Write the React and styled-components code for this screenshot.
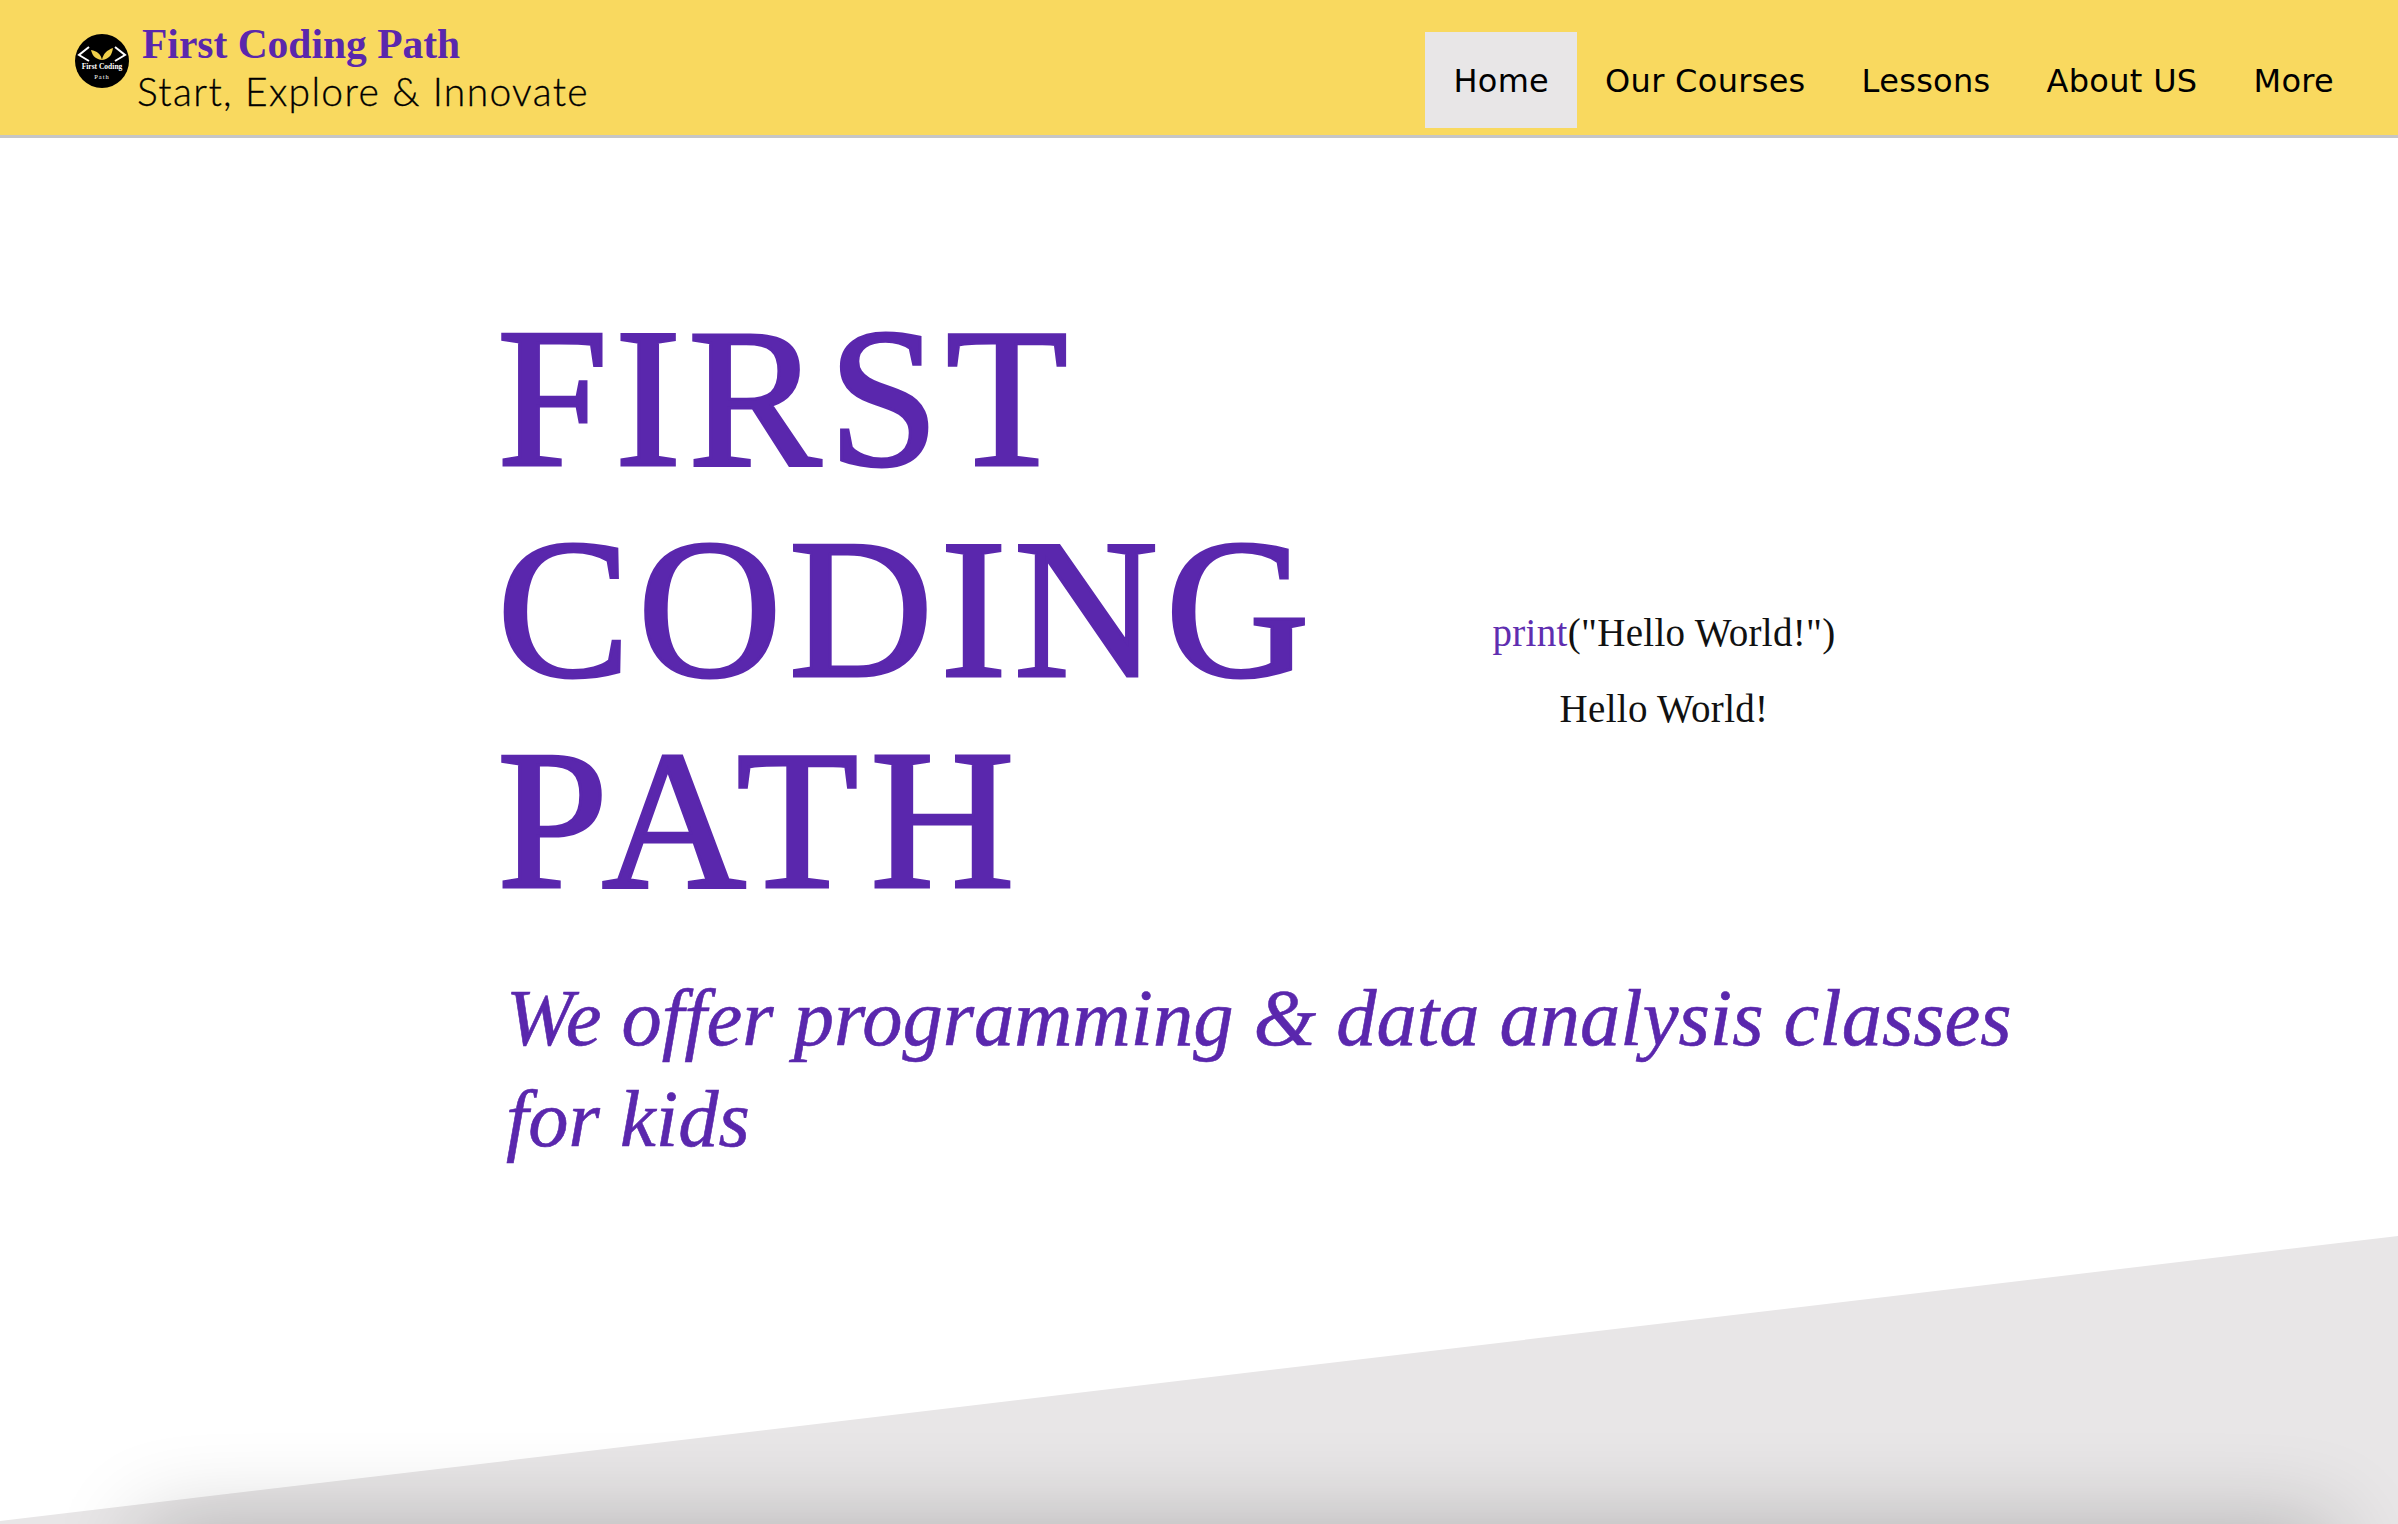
import React from "react";
import styled, { createGlobalStyle } from "styled-components";

const Global = createGlobalStyle`
  html, body { margin: 0; padding: 0; height: 100%; background: #fff; overflow: hidden; }
  #root { height: 100%; }
`;
const Page = styled.div`
  height: 1524px; display: flex; flex-direction: column; overflow: hidden; background: #fff;
`;
const Header = styled.header`
  flex: none; height: 135px; background: #f9d95f; border-bottom: 3px solid #c6c6c6;
  display: flex; justify-content: space-between; padding: 0 36px 0 74px;
`;
const Brand = styled.div`
  display: flex; align-items: flex-start; gap: 8px; padding-top: 21px;
`;
const Logo = styled.svg`
  width: 56px; height: 56px; margin-top: 12px; flex: none;
`;
const BrandText = styled.div`
  display: flex; flex-direction: column; margin-left: -1px;
`;
const BrandName = styled.div`
  font: 700 41.5px/47px "Liberation Serif", serif; color: #5a27ad; padding-left: 5px;
`;
const Tagline = styled.div`
  font: 300 39px/47px "Lato", sans-serif; letter-spacing: 1.35px; color: #000; white-space: nowrap;
  -webkit-text-stroke: 0.3px #000;
`;
const Nav = styled.nav`
  display: flex; align-items: flex-end; padding-bottom: 7px;
`;
const NavItem = styled.a`
  height: 96px; box-sizing: border-box; display: flex; align-items: center; padding: 2px 28px 0;
  font: 400 32px "DejaVu Sans", sans-serif; letter-spacing: 0.3px; color: #000;
  background: ${(p) => (p.$active ? "#e8e6e7" : "transparent")};
`;
const Hero = styled.main`
  flex: 1; min-height: 0; padding: 154px 0 0 497px; display: flex; flex-direction: column;
`;
const HeroTop = styled.div`
  display: flex; align-items: center;
`;
const Title = styled.h1`
  margin: 0; width: 994px; flex: none;
  font: 400 200px/211px "Liberation Serif", serif; color: #5a27ad;
  -webkit-text-stroke: 3px #5a27ad;
`;
const TitleLine = styled.span`
  display: block; letter-spacing: ${(p) => p.$spacing}px;
`;
const Code = styled.div`
  width: 346px; margin-top: 124px; text-align: center;
  font: 400 39px/76px "Liberation Serif", serif; letter-spacing: 0.3px; color: #111;
`;
const Keyword = styled.span`
  color: #5f2eb0;
`;
const Subtitle = styled.p`
  margin: 42px 0 0 9px; width: 1520px;
  font: italic 400 80.5px/101px "Liberation Serif", serif; color: #5a27ad;
  -webkit-text-stroke: 0.6px #5a27ad;
`;
const Wedge = styled.div`
  flex: none; height: 288px; position: relative; overflow: hidden;
  &::before {
    content: ""; position: absolute; inset: 0; background: #e8e6e7;
    clip-path: polygon(0 285px, 100% 0, 100% 100%, 0 100%);
  }
  &::after {
    content: ""; position: absolute; left: 145px; right: 65px; top: 288px; height: 100px;
    box-shadow: 0 0 90px rgba(0, 0, 0, 0.24);
  }
`;

export default function App() {
  return (
    <Page>
      <Global />
      <Header>
        <Brand>
          <Logo viewBox="0 0 56 56">
            <circle cx="28" cy="28" r="27" fill="#000" />
            <path d="M15 14 L5 22 L15 28 M41 14 L51 22 L41 28" fill="none" stroke="#fff" strokeWidth="2" />
            <path d="M28 27 C20 26 18 21 17 17 C23 18 27 21 28 27 Z M28 27 C36 26 38 21 39 15 C33 17 29 21 28 27 Z" fill="#f0d04a" />
            <text x="28" y="36" textAnchor="middle" fontFamily="Liberation Serif, serif" fontSize="7.5" fontWeight="700" fill="#fff">First Coding</text>
            <text x="28" y="46" textAnchor="middle" fontFamily="Liberation Serif, serif" fontSize="6.5" letterSpacing="1" fill="#fff">Path</text>
          </Logo>
          <BrandText>
            <BrandName>First Coding Path</BrandName>
            <Tagline>Start, Explore &amp; Innovate</Tagline>
          </BrandText>
        </Brand>
        <Nav>
          <NavItem $active>Home</NavItem>
          <NavItem>Our Courses</NavItem>
          <NavItem>Lessons</NavItem>
          <NavItem>About US</NavItem>
          <NavItem>More</NavItem>
        </Nav>
      </Header>
      <Hero>
        <HeroTop>
          <Title>
            <TitleLine $spacing={6.6}>FIRST</TitleLine>
            <TitleLine $spacing={7}>CODING</TitleLine>
            <TitleLine $spacing={12}>PATH</TitleLine>
          </Title>
          <Code>
            <div><Keyword>print</Keyword>("Hello World!")</div>
            <div>Hello World!</div>
          </Code>
        </HeroTop>
        <Subtitle>We offer programming &amp; data analysis classes for kids</Subtitle>
      </Hero>
      <Wedge />
    </Page>
  );
}
